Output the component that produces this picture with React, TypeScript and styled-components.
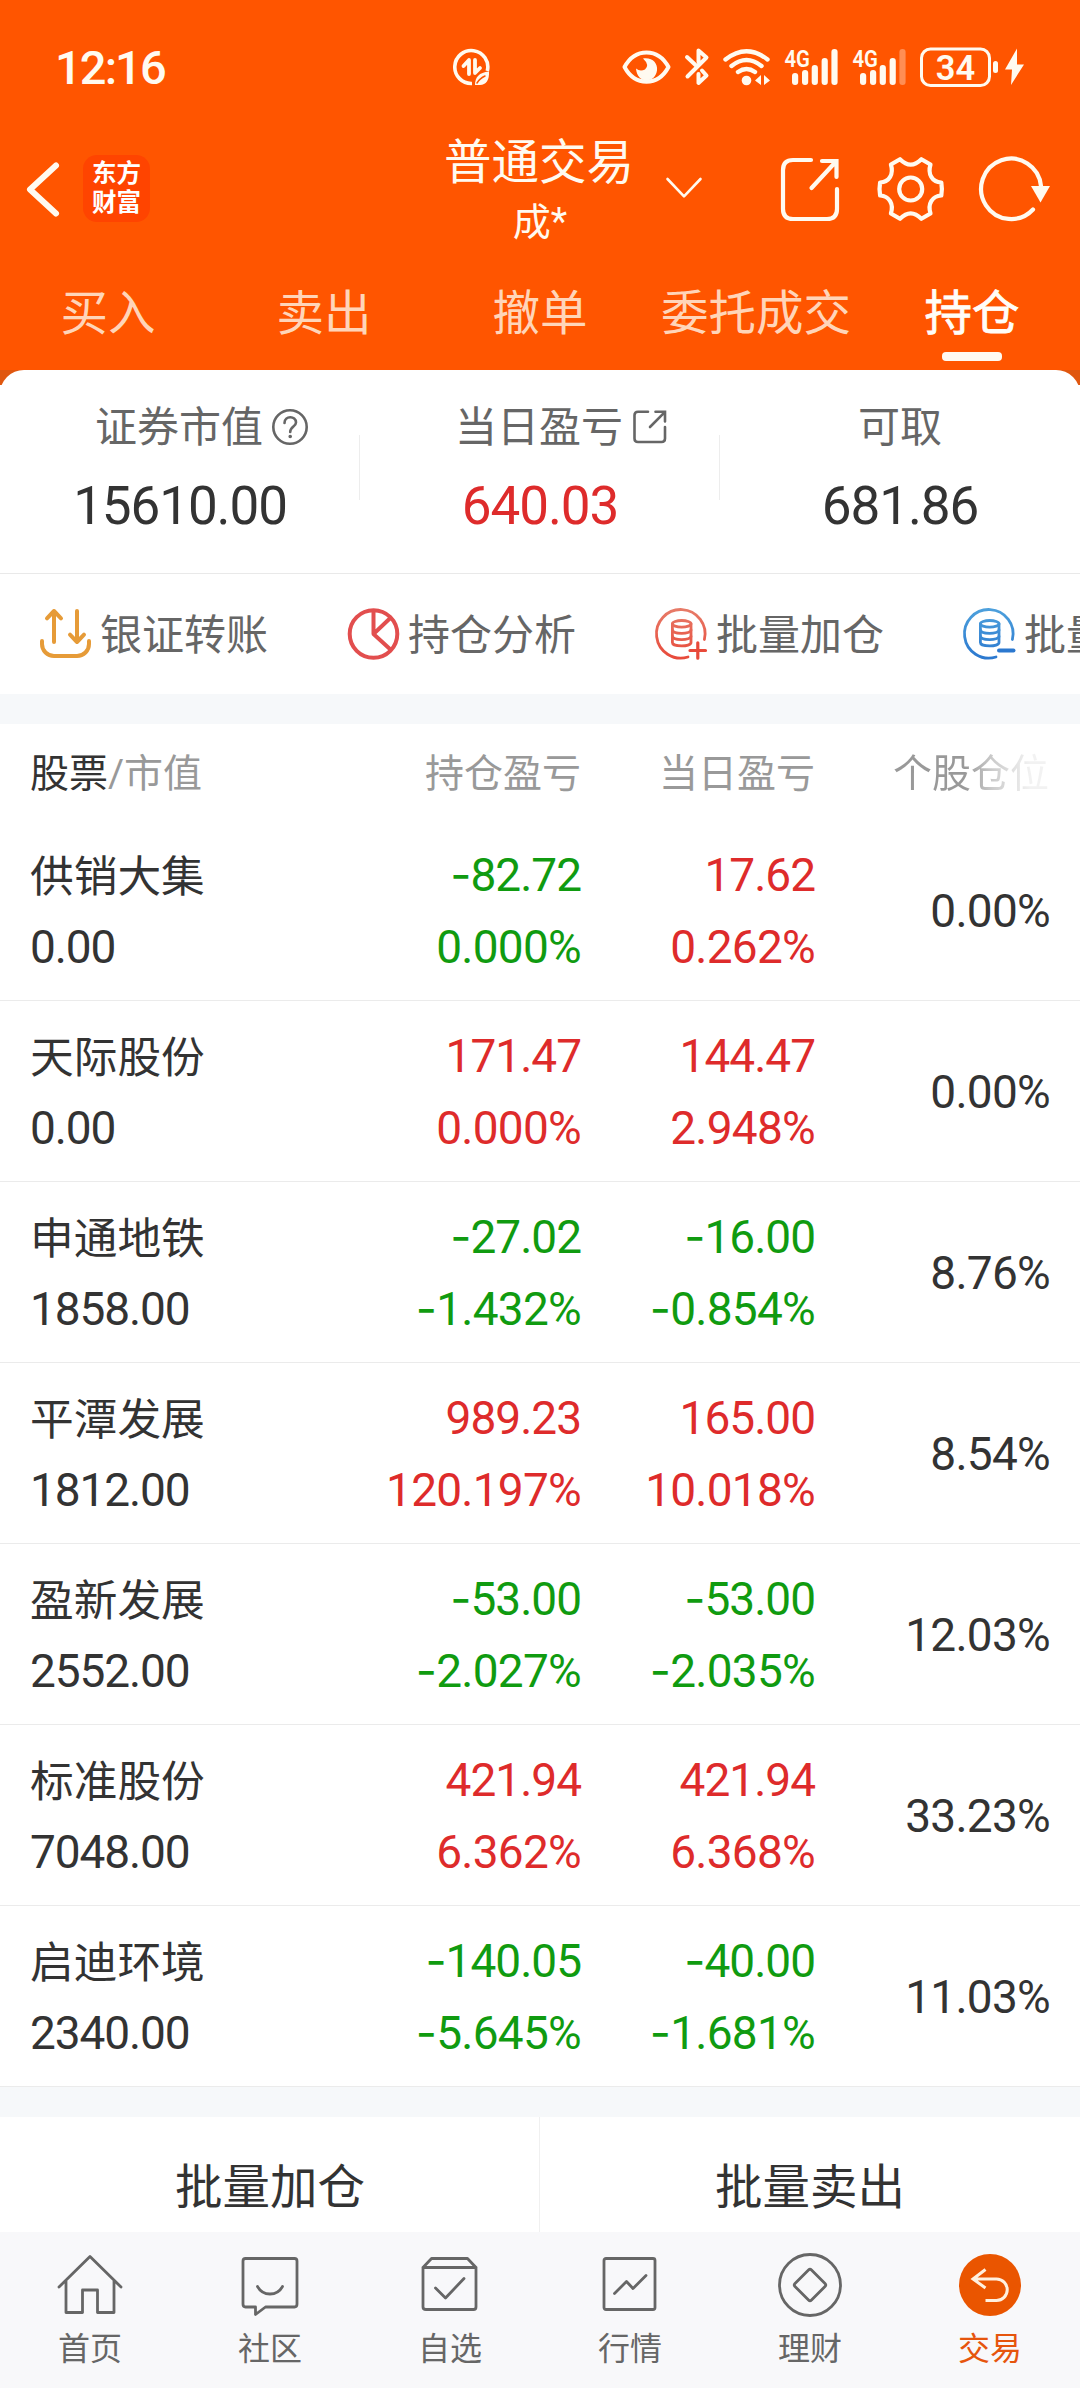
import React from 'react';
import styled, { createGlobalStyle } from 'styled-components';

const GlobalStyle = createGlobalStyle`
  html, body { margin: 0; padding: 0; background: #fff; }
  *, *::before, *::after { box-sizing: border-box; }
  body { font-family: Roboto, 'Noto Sans CJK SC', sans-serif; color: #333; }
  svg { display: block; flex: none; }
`;

const Screen = styled.div`
  width: 1080px;
  height: 2388px;
  display: flex;
  flex-direction: column;
  overflow: hidden;
  background: #fff;
`;

const Header = styled.header`
  background: #ff5500;
  color: #fffaf0;
  height: 370px;
  flex: none;
  display: flex;
  flex-direction: column;
`;

const StatusBar = styled.div`
  height: 134px;
  display: flex;
  align-items: center;
  padding: 0 56px 0 55px;
`;

const Clock = styled.div`
  width: 398px;
  font-size: 47px;
  line-height: 50px;
  padding-top: 1px;
  font-weight: 500;
  letter-spacing: -1.9px;
`;

const StatusIcons = styled.div`
  margin-left: auto;
  display: flex;
  align-items: center;
`;

const NavBar = styled.div`
  height: 118px;
  display: grid;
  grid-template-columns: 350px 1fr 350px;
`;

const NavLeft = styled.div`
  display: flex;
  align-items: center;
  padding: 0 0 10px 24px;
  gap: 21px;
`;

const Logo = styled.div`
  width: 67px;
  height: 67px;
  border-radius: 14px;
  background: #ff4400;
  color: #fff;
  display: flex;
  flex-direction: column;
  align-items: center;
  justify-content: center;
  font-weight: 700;
  font-size: 24.5px;
  line-height: 29px;
  padding-bottom: 1px;
`;

const TitleBox = styled.div`
  display: flex;
  justify-content: center;
  position: relative;
`;

const Titles = styled.div`
  text-align: center;
  padding-top: 1px;
`;

const Title = styled.div`
  font-size: 47.5px;
  line-height: 56px;
  margin-left: -2px;
`;

const SubTitle = styled.div`
  font-size: 38px;
  line-height: 62px;
`;

const TitleArrow = styled.div`
  position: absolute;
  left: 312px;
  top: 40px;
`;

const NavRight = styled.div`
  display: flex;
  align-items: center;
  justify-content: flex-end;
  padding: 0 26px 10px 0;
`;

const Tabs = styled.nav`
  display: grid;
  grid-template-columns: repeat(5, 216px);
  height: 118px;
`;

const Tab = styled.div<{ $active?: boolean }>`
  display: flex;
  flex-direction: column;
  align-items: center;
  font-size: 47.5px;
  line-height: 60px;
  padding-top: 32px;
  white-space: nowrap;
  color: ${(p) => (p.$active ? '#fffdf8' : '#ffd5b9')};
  -webkit-text-stroke: ${(p) => (p.$active ? '0.8px #fffdf8' : '0')};
  &::after {
    content: '';
    width: 60px;
    height: 9px;
    margin-top: 8px;
    border-radius: 4px;
    background: ${(p) => (p.$active ? '#fffaf2' : 'transparent')};
  }
`;

const SummaryWrap = styled.div`
  background: linear-gradient(#e0570f 0 15px, #fff 15px);
  flex: none;
`;

const Summary = styled.section`
  height: 204px;
  background: #fff;
  border-radius: 24px 24px 0 0;
  border-bottom: 1px solid #e9e9e9;
  display: grid;
  grid-template-columns: repeat(3, 360px);
`;

const Stat = styled.div`
  display: flex;
  flex-direction: column;
  align-items: center;
  padding-top: 30px;
  background: linear-gradient(#ededed, #ededed) right 0 top 65px / 1px 65px no-repeat;
  &:last-child { background: none; }
`;

const StatLabel = styled.div<{ $indent?: boolean }>`
  display: flex;
  align-items: center;
  gap: 8px;
  padding-left: ${(p) => (p.$indent ? '44px' : '0')};
  font-size: 42px;
  line-height: 56px;
  color: #666;
`;

const StatValue = styled.div<{ $red?: boolean }>`
  margin-top: 20px;
  font-size: 53px;
  line-height: 60px;
  letter-spacing: -1.1px;
  color: ${(p) => (p.$red ? '#de2b2b' : '#333')};
`;

const Tools = styled.div`
  height: 120px;
  flex: none;
  display: grid;
  grid-template-columns: repeat(4, 308px);
  padding-left: 37px;
  overflow: hidden;
`;

const Tool = styled.div`
  display: flex;
  align-items: center;
  gap: 5px;
  font-size: 42px;
  line-height: 60px;
  color: #666;
  white-space: nowrap;
`;

const ToolLabel = styled.span`
  padding-top: 3px;
`;

const Band = styled.div`
  height: 30px;
  flex: none;
  background: #f6f8fa;
`;

const gridColumns = '300px 251px 234px 235px';

const HeadRow = styled.div`
  height: 96px;
  flex: none;
  display: grid;
  grid-template-columns: ${gridColumns};
  padding: 2px 30px 0;
  font-size: 39px;
  line-height: 96px;
  color: #999;
  text-align: right;
`;

const HeadName = styled.div`
  text-align: left;
  b { font-weight: 400; color: #333; }
`;

const FadingHead = styled.div`
  margin-right: 1px;
  background: linear-gradient(90deg, #999 0 64%, #ccc 76%, #f2f2f2 92%);
  background-clip: text;
  -webkit-background-clip: text;
  color: transparent;
`;

const Row = styled.div`
  height: 181px;
  flex: none;
  display: grid;
  grid-template-columns: ${gridColumns};
  padding: 19px 30px 17px;
  border-bottom: 1px solid #ebebeb;
  font-size: 46px;
  line-height: 72px;
  letter-spacing: -0.75px;
  text-align: right;
`;

const NameCell = styled.div`
  text-align: left;
  letter-spacing: -1.1px;
`;

const StockName = styled.div`
  height: 72px;
  padding-top: 2px;
  font-size: 43.7px;
  letter-spacing: 0;
`;

const Pair = styled.div<{ $down: boolean }>`
  color: ${(p) => (p.$down ? '#109b10' : '#de2b2b')};
`;

const Figure = styled.div<{ $tight: boolean }>`
  height: 72px;
  letter-spacing: ${(p) => (p.$tight ? '-1px' : '-0.75px')};
`;

const Share = styled.div`
  align-self: center;
`;

const Minus = styled.span`
  font-family: Inter, sans-serif;
  line-height: 1;
`;

const Actions = styled.div`
  height: 115px;
  flex: none;
  display: grid;
  grid-template-columns: 540px 540px;
  overflow: hidden;
`;

const Action = styled.div`
  height: 133px;
  display: flex;
  align-items: center;
  justify-content: center;
  font-size: 47.5px;
  color: #333;
  &:first-child { background: linear-gradient(#f0f0f0, #f0f0f0) right 0 top 0 / 1px 100% no-repeat; }
`;

const BottomBar = styled.nav`
  flex: 1;
  background: #f8f8fa;
  display: grid;
  grid-template-columns: repeat(6, 180px);
`;

const BottomItem = styled.div<{ $active?: boolean }>`
  display: flex;
  flex-direction: column;
  align-items: center;
  padding-top: 18px;
  font-size: 32px;
  line-height: 40px;
  gap: 9px;
  color: ${(p) => (p.$active ? '#e6550d' : '#666')};
`;

/* Every header glyph is drawn on one shared 1080-wide coordinate strip. */
const Glyph = ({ x, y, w, h, children, width = 4 }: {
  x: number; y: number; w: number; h: number; width?: number; children: React.ReactNode;
}) => (
  <svg width={w} height={h} viewBox={`${x} ${y} ${w} ${h}`} fill="none" stroke="#fffaf0"
    strokeWidth={width} strokeLinecap="round" strokeLinejoin="round">
    {children}
  </svg>
);

const Signal = ({ weak, w }: { weak?: boolean; w: number }) => (
  <Glyph x={784} y={42} w={w} h={50}>
    <text x="784.5" y="66.500" fontFamily="Roboto" fontWeight="600" fontSize="24" textLength="25.500"
      lengthAdjust="spacingAndGlyphs" fill="#fffaf0" stroke="none">4G</text>
    {[[792, 73], [802, 70], [811.7, 65], [821.6, 58], [831.4, 49]].map(([bx, by], i) => (
      <rect key={bx} x={bx} y={by} width="6.2" height={85 - by} rx="3" fill="#fffaf0" stroke="none"
        opacity={weak && i === 4 ? 0.35 : 1} />
    ))}
  </Glyph>
);

const Coins = ({ minus }: { minus?: boolean }) => {
  const id = minus ? 'coinBlue' : 'coinRed';
  const end = minus ? '#2b78cf' : '#e8493a';
  return (
    <svg width="58" height="60" viewBox="0 0 58 60" fill="none" stroke={`url(#${id})`} strokeWidth="2.8"
      strokeLinecap="round" strokeLinejoin="round">
      <defs>
        <linearGradient id={id} gradientUnits="userSpaceOnUse" x1="0" y1="5" x2="0" y2="55">
          <stop offset="0" stopColor={minus ? '#4da0dc' : '#e77b68'} />
          <stop offset="1" stopColor={end} />
        </linearGradient>
      </defs>
      <path d="M51.4 35.500A24.300 24.300 0 1 0 35 53" />
      <ellipse cx="28.700" cy="19.800" rx="9.300" ry="3.300" />
      <path d="M19.400 19.800V38.500c0 4.600 18.600 4.600 18.600 0V19.800" />
      <path d="M19.400 26c0 4.400 18.600 4.400 18.600 0M19.400 32.300c0 4.400 18.600 4.400 18.600 0" />
      <path d={minus ? 'M38 46.5H52.5' : 'M37 46.5H52.5M44.8 38.8V54.2'} stroke={end} strokeWidth={minus ? 4 : 3.2} />
    </svg>
  );
};

const TransferIcon = () => (
  <svg width="58" height="60" viewBox="0 0 58 60" fill="none" stroke="#e69b38" strokeWidth="4"
    strokeLinecap="round" strokeLinejoin="round">
    <path d="M17 38V7M10 14.300L17 7l7 7.300M40 7v31M33 30.700L40 38l7-7.300" />
    <path d="M5 37v3a12 12 0 0 0 12 12h23a12 12 0 0 0 12-12v-3" />
  </svg>
);

const PieIcon = () => (
  <svg width="58" height="60" viewBox="0 0 58 60" fill="none" stroke="#e24e4e" strokeWidth="4" strokeLinejoin="round">
    <circle cx="28.5" cy="30" r="23.8" />
    <path d="M28.5 6V30L45.6 13.8M28.5 30L46 46" />
  </svg>
);

const line = { fill: 'none', stroke: '#666', strokeWidth: 2.8, strokeLinejoin: 'round' as const, strokeLinecap: 'round' as const };

const HomeIcon = () => (
  <svg width="70" height="70" viewBox="0 0 70 70" {...line}>
    <path d="M4 37L35 6.500L66 37M11 31V62.500H27.500V40H42.500V62.500H59V31" />
  </svg>
);
const ChatIcon = () => (
  <svg width="70" height="70" viewBox="0 0 70 70" {...line}>
    <path d="M10.500 8.500H59.500Q62 8.500 62 11V54Q62 57 59.500 57H30.500L20.500 64.500V57H10.500Q8 57 8 54V11Q8 8.500 10.500 8.500Z" />
    <path d="M22.500 36.500C28 46.500 42 46.500 47.500 36.500" />
  </svg>
);
const PickIcon = () => (
  <svg width="70" height="70" viewBox="0 0 70 70" {...line}>
    <path d="M8 17.500L16.500 8.500H52.500L61 17.500M8 17.500H61V57Q61 59.500 58.500 59.500H11Q8 59.500 8 57Z" />
    <path d="M20.500 38L30.500 48L49 28.500" />
  </svg>
);
const ChartIcon = () => (
  <svg width="70" height="70" viewBox="0 0 70 70" {...line}>
    <rect x="9" y="8.500" width="51" height="51" rx="2" />
    <path d="M19.500 43.500L31.500 31.500L38 38.500L51 25.500" />
  </svg>
);
const FinanceIcon = () => (
  <svg width="70" height="70" viewBox="0 0 70 70" {...line}>
    <circle cx="35" cy="35" r="30.500" />
    <path d="M33.500 20Q35 18.500 36.500 20L50 33.500Q51.500 35 50 36.500L36.500 50Q35 51.500 33.500 50L20 36.500Q18.500 35 20 33.500Z" />
  </svg>
);
const TradeIcon = () => (
  <svg width="70" height="70" viewBox="0 0 70 70" fill="none">
    <circle cx="35" cy="35" r="31" fill="#ea5500" />
    <path d="M30.500 19.500L18 29L30.500 38M18.500 29H41.500A10.700 10.700 0 0 1 41.500 50.500H30.500" stroke="#fff0de" strokeWidth="3" />
  </svg>
);

const Num = ({ children }: { children: string }) => {
  const negative = children.startsWith('-');
  return (
    <Figure $tight={!children.endsWith('%')}>
      {negative && <Minus>-</Minus>}
      {negative ? children.slice(1) : children}
    </Figure>
  );
};

type Holding = [string, string, string, string, string, string, string];
const holdings: Holding[] = [
  ['供销大集', '0.00', '-82.72', '0.000%', '17.62', '0.262%', '0.00%'],
  ['天际股份', '0.00', '171.47', '0.000%', '144.47', '2.948%', '0.00%'],
  ['申通地铁', '1858.00', '-27.02', '-1.432%', '-16.00', '-0.854%', '8.76%'],
  ['平潭发展', '1812.00', '989.23', '120.197%', '165.00', '10.018%', '8.54%'],
  ['盈新发展', '2552.00', '-53.00', '-2.027%', '-53.00', '-2.035%', '12.03%'],
  ['标准股份', '7048.00', '421.94', '6.362%', '421.94', '6.368%', '33.23%'],
  ['启迪环境', '2340.00', '-140.05', '-5.645%', '-40.00', '-1.681%', '11.03%'],
];

const bottomItems: [string, React.ReactNode][] = [
  ['首页', <HomeIcon />],
  ['社区', <ChatIcon />],
  ['自选', <PickIcon />],
  ['行情', <ChartIcon />],
  ['理财', <FinanceIcon />],
  ['交易', <TradeIcon />],
];

/* Six-lobed gear outline with scooped notches between the lobes. */
const GEAR = 'M900 158.200Q910.700 169 921.400 158.200L930.500 163.500C927.500 173 932 181 941.300 181.500Q942.500 188 941.300 194.500C932 195 927.500 203 930.500 212.500L921.400 217.800Q910.700 207 900 217.800L890.900 212.500C893.900 203 889.400 195 880.100 194.500Q878.900 188 880.100 181.500C889.400 181 893.900 173 890.900 163.500Z';

export default function App() {
  return (
    <Screen>
      <GlobalStyle />
      <Header>
        <StatusBar>
          <Clock>12:16</Clock>
          <Glyph x={453} y={42} w={38} h={50} width={3.6}>
            <path d="M487.300 71A16.500 16.500 0 1 0 472 83.500" strokeLinecap="butt" />
            <path d="M469 74V60L463.500 66M475 60V73L480 68" strokeWidth="3.800" />
            <path d="M489 71.500C489.500 80 486 85 480 85H475C475 77 479 72.500 489 71.500Z" fill="#fffaf0" stroke="none" />
            <path d="M477 83Q480 78 485 76" stroke="#ff5500" strokeWidth="1.500" />
          </Glyph>
          <StatusIcons>
            <Glyph x={620} y={42} w={62} h={50}>
              <path d="M624.500 67C635 47.500 658 47.500 668.500 67C658 86.500 635 86.500 624.500 67Z" />
              <path d="M643 58.500C652 57 658 63 657 70.500C655 84 637 84 636 68.500Q640 72 645 69.500Q650 65 643 58.500Z" fill="#fffaf0" stroke="none" />
            </Glyph>
            <Glyph x={682} y={42} w={40} h={50}>
              <path d="M687 57L696 65.500M698.500 62V50.500L706.500 57.500L687.500 76.500M702 70.500L706.500 75.500L698.500 83V74" />
            </Glyph>
            <Glyph x={722} y={42} w={62} h={50} width={4.4}>
              <path d="M725.500 59.500Q746.500 43 767.500 59.500M731.500 66Q746.500 54 761.500 66M738 72Q746.500 66 755 72" />
              <circle cx="746.500" cy="80.500" r="4.800" fill="#fffaf0" stroke="none" />
              <path d="M761 75V85L755 80.500ZM764 75V85L770 80.500Z" fill="#fffaf0" stroke="none" />
            </Glyph>
            <Signal w={68} />
            <Signal w={67} weak />
            <Glyph x={919} y={42} w={105} h={50}>
              <rect x="921.500" y="49" width="68" height="36.500" rx="9" strokeWidth="3" />
              <text x="955.500" y="79.500" textAnchor="middle" fontFamily="Roboto" fontWeight="600" fontSize="34.500"
                fill="#fffaf0" stroke="none">34</text>
              <rect x="993" y="61" width="5" height="12" rx="2.500" fill="#fffaf0" stroke="none" />
              <path d="M1017 48.500L1005 69.500H1012L1011 85L1024 64.500H1017Z" fill="#fffaf0" stroke="none" />
            </Glyph>
          </StatusIcons>
        </StatusBar>
        <NavBar>
          <NavLeft>
            <Glyph x={24} y={156} w={38} h={64} width={6}>
              <path d="M56 164.500L30 188.500L56 212.500" />
            </Glyph>
            <Logo><span>东方</span><span>财富</span></Logo>
          </NavLeft>
          <TitleBox>
            <Titles>
              <Title>普通交易</Title>
              <SubTitle>成*</SubTitle>
            </Titles>
            <TitleArrow>
              <Glyph x={662} y={174} w={44} h={28} width={2.6}>
                <path d="M667.500 179L684 196.300L700.500 179" />
              </Glyph>
            </TitleArrow>
          </TitleBox>
          <NavRight>
            <Glyph x={776} y={152} w={96} h={72} width={4.2}>
              <path d="M811 159H793Q783 159 783 169V208Q783 218 793 218H827Q837 218 837 208V188" />
              <path d="M822 160H836.500V176M836 160.500L811.500 187" strokeLinejoin="miter" />
            </Glyph>
            <Glyph x={872} y={152} w={102} h={72} width={4.2}>
              <path d={GEAR} />
              <circle cx="910.700" cy="188" r="11.500" />
            </Glyph>
            <Glyph x={974} y={152} w={80} h={72} width={4.2}>
              <path d="M1033 208.500A30 30.200 0 1 1 1041 185" />
              <path d="M1031 185H1050L1040.500 201.500Z" fill="#fffaf0" stroke="none" />
            </Glyph>
          </NavRight>
        </NavBar>
        <Tabs>
          <Tab>买入</Tab>
          <Tab>卖出</Tab>
          <Tab>撤单</Tab>
          <Tab>委托成交</Tab>
          <Tab $active>持仓</Tab>
        </Tabs>
      </Header>

      <SummaryWrap>
        <Summary>
          <Stat>
            <StatLabel $indent>
              证券市值
              <svg width="38" height="38" viewBox="0 0 38 38" fill="none" stroke="#666" strokeWidth="2.600" strokeLinecap="round">
                <circle cx="19" cy="18" r="16.700" />
                <path d="M13.500 14C13.500 6.500 25 6.500 25 13.500C25 17.500 19.200 17.800 19.200 23" />
                <circle cx="19.200" cy="27.500" r="1.200" fill="#666" strokeWidth="1.200" />
              </svg>
            </StatLabel>
            <StatValue>15610.00</StatValue>
          </Stat>
          <Stat>
            <StatLabel $indent>
              当日盈亏
              <svg width="38" height="38" viewBox="0 0 38 38" fill="none" stroke="#666" strokeWidth="2.600" strokeLinecap="round">
                <path d="M17 2.800H7Q3.500 2.800 3.500 6.300V29.500Q3.500 33 7 33H30.500Q34 33 34 29.500V18M24.500 2.800H34V12.500M33.500 3.300L19 18" />
              </svg>
            </StatLabel>
            <StatValue $red>640.03</StatValue>
          </Stat>
          <Stat>
            <StatLabel>可取</StatLabel>
            <StatValue>681.86</StatValue>
          </Stat>
        </Summary>
      </SummaryWrap>

      <Tools>
        <Tool><TransferIcon /><ToolLabel>银证转账</ToolLabel></Tool>
        <Tool><PieIcon /><ToolLabel>持仓分析</ToolLabel></Tool>
        <Tool><Coins /><ToolLabel>批量加仓</ToolLabel></Tool>
        <Tool><Coins minus /><ToolLabel>批量减仓</ToolLabel></Tool>
      </Tools>
      <Band />

      <HeadRow>
        <HeadName><b>股票</b>/市值</HeadName>
        <div>持仓盈亏</div>
        <div>当日盈亏</div>
        <FadingHead>个股仓位</FadingHead>
      </HeadRow>
      {holdings.map(([name, value, total, totalPct, day, dayPct, share]) => (
        <Row key={name}>
          <NameCell>
            <StockName>{name}</StockName>
            <div>{value}</div>
          </NameCell>
          <Pair $down={total.startsWith('-')}><Num>{total}</Num><Num>{totalPct}</Num></Pair>
          <Pair $down={day.startsWith('-')}><Num>{day}</Num><Num>{dayPct}</Num></Pair>
          <Share>{share}</Share>
        </Row>
      ))}
      <Band />
      <Actions>
        <Action>批量加仓</Action>
        <Action>批量卖出</Action>
      </Actions>
      <BottomBar>
        {bottomItems.map(([label, icon]) => (
          <BottomItem key={label} $active={label === '交易'}>{icon}{label}</BottomItem>
        ))}
      </BottomBar>
    </Screen>
  );
}
